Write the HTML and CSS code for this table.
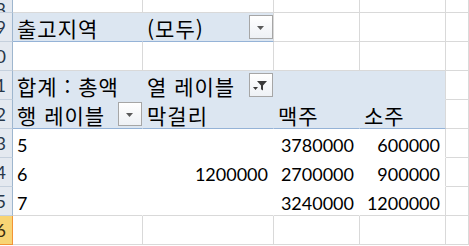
FILE: index.html
```html
<!DOCTYPE html>
<html lang="ko">
<head>
<meta charset="utf-8">
<link rel="stylesheet" href="styles.css">
</head>
<body>
<div class="sheet">
  <!-- row 8 -->
  <div class="rh first"><span>8</span></div>
  <div class="c"></div><div class="c"></div><div class="c"></div><div class="c"></div><div class="c"></div>
  <!-- row 9 -->
  <div class="rh"><span>9</span></div>
  <div class="c pv pvline nob">출고지역</div>
  <div class="c pv pvline">(모두)<span class="btn"><svg viewBox="0 0 23 23" width="23" height="23"><path d="M8 10h7l-3.5 4z" fill="#5a5a5a"/></svg></span></div>
  <div class="c"></div><div class="c"></div><div class="c"></div>
  <!-- row 10 -->
  <div class="rh"><span>10</span></div>
  <div class="c"></div><div class="c"></div><div class="c"></div><div class="c"></div><div class="c"></div>
  <!-- row 11 -->
  <div class="rh"><span>11</span></div>
  <div class="c pv nob nobb">합계 : 총액</div>
  <div class="c pv nob nobb">열 레이블<span class="btn"><svg viewBox="0 0 23 23" width="23" height="23"><path d="M4 13h5l-2.5 3z" fill="#3a3a3a"/><path d="M8 7h10l-4 4.5v5l-2 -1.2v-3.8z" fill="#3a3a3a"/></svg></span></div>
  <div class="c pv nob nobb"></div>
  <div class="c pv nobb"></div>
  <div class="c"></div>
  <!-- row 12 -->
  <div class="rh"><span>12</span></div>
  <div class="c pv pvline nob">행 레이블<span class="btn"><svg viewBox="0 0 23 23" width="23" height="23"><path d="M8 10h7l-3.5 4z" fill="#5a5a5a"/></svg></span></div>
  <div class="c pv pvline nob">막걸리</div>
  <div class="c pv pvline nob">맥주</div>
  <div class="c pv pvline">소주</div>
  <div class="c"></div>
  <!-- row 13 -->
  <div class="rh"><span>13</span></div>
  <div class="c w nob nobb num">5</div>
  <div class="c w nob nobb"></div>
  <div class="c w nob nobb num r">3780000</div>
  <div class="c w nobb num r">600000</div>
  <div class="c"></div>
  <!-- row 14 -->
  <div class="rh"><span>14</span></div>
  <div class="c w nob nobb num">6</div>
  <div class="c w nob nobb num r">1200000</div>
  <div class="c w nob nobb num r">2700000</div>
  <div class="c w nobb num r">900000</div>
  <div class="c"></div>
  <!-- row 15 -->
  <div class="rh"><span>15</span></div>
  <div class="c w nob num">7</div>
  <div class="c w nob"></div>
  <div class="c w nob num r">3240000</div>
  <div class="c w num r">1200000</div>
  <div class="c"></div>
  <!-- row 16 -->
  <div class="rh sel"><span>16</span></div>
  <div class="c"></div><div class="c"></div><div class="c"></div><div class="c"></div><div class="c"></div>
</div>
</body>
</html>
```
FILE: styles.css
```css
html, body {
  margin: 0;
  padding: 0;
  background: #ffffff;
  overflow: hidden;
}
.sheet {
  display: grid;
  grid-template-columns: 13px 130px 131px 86px 86px 23px;
  grid-template-rows: 13px repeat(8, 29px);
  font-family: "Noto Sans CJK KR", "Noto Sans", sans-serif;
  font-size: 21px;
  letter-spacing: 1px;
  color: #000;
}
.rh {
  box-sizing: border-box;
  border-right: 1px solid #9eb6ce;
  border-bottom: 1px solid #c5d0dd;
  background: #e4e9f0;
  overflow: hidden;
  display: flex;
  align-items: center;
  font-family: "Lato", sans-serif;
  font-size: 18px;
  letter-spacing: 0;
  color: #27374a;
}
.rh span {
  flex: 0 0 40px;
  margin-left: -34px;
  text-align: right;
}
.rh.first {
  align-items: flex-end;
}
.rh.first span {
  margin-bottom: -8px;
}
.rh.sel {
  background: #f8d474;
  border-right: 1px solid #f29436;
  border-bottom: 1px solid #f29436;
  color: #3a2c10;
}
.c {
  box-sizing: border-box;
  border-right: 1px solid #d9d9d9;
  border-bottom: 1px solid #d9d9d9;
  display: flex;
  align-items: flex-end;
  padding: 0 5px 1px 4px;
  line-height: 24px;
  white-space: nowrap;
}
.pv {
  background: #dce6f1;
  border-right-color: #dce6f1;
  border-bottom-color: #dce6f1;
}
.pv.pvline {
  border-bottom-color: #95b3d7;
}
.pv:not(.nob) {
  border-right-color: #d9d9d9;
}
.w {
  background: #ffffff;
}
.w.nob {
  border-right-color: #ffffff;
}
.nobb {
  border-bottom-color: #ffffff;
}
.pv.nobb {
  border-bottom-color: #dce6f1;
}
.num {
  font-family: "Lato", sans-serif;
  font-size: 18px;
  letter-spacing: 0;
  padding-bottom: 0;
}
.r {
  justify-content: flex-end;
}
.btn {
  align-self: flex-start;
  margin: 2px -5px 0 auto;
  width: 24px;
  height: 24px;
  box-sizing: border-box;
  border: 1px solid #a6a6a6;
  background: linear-gradient(#ffffff, #eef1f5);
  display: flex;
  letter-spacing: 0;
}
.btn svg {
  display: block;
  margin: 0 0 0 -1px;
}
```
